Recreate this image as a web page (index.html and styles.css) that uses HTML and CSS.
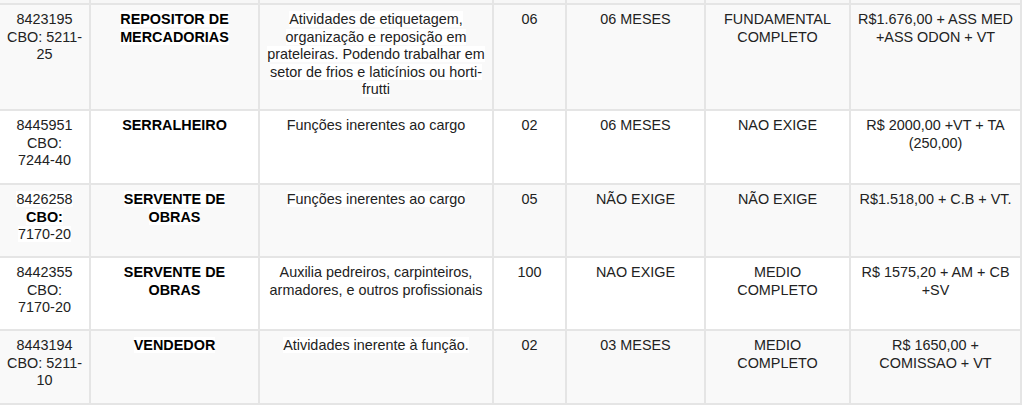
FILE: index.html
```html
<!DOCTYPE html>
<html lang="pt-BR">
<head>
<meta charset="utf-8">
<title>Vagas</title>
<link rel="stylesheet" href="styles.css">
</head>
<body>
<table class="vagas">
  <colgroup>
    <col class="c-cod"><col class="c-cargo"><col class="c-desc"><col class="c-qtd"><col class="c-exp"><col class="c-esc"><col class="c-sal">
  </colgroup>
  <tbody>
    <tr class="cut"><td></td><td></td><td></td><td></td><td></td><td></td><td></td></tr>
    <tr class="alt r-tall">
      <td>8423195 CBO: 5211-<wbr>25</td>
      <td><strong class="hl">REPOSITOR DE MERCADORIAS</strong></td>
      <td><span class="hl">Atividades de etiquetagem, organização e reposição em prateleiras. Podendo trabalhar em setor de frios e laticínios ou horti-<wbr>frutti</span></td>
      <td>06</td>
      <td>06 MESES</td>
      <td>FUNDAMENTAL COMPLETO</td>
      <td>R$1.676,00 + ASS MED +ASS ODON + VT</td>
    </tr>
    <tr class="r-a">
      <td>8445951 CBO: 7244&#8209;40</td>
      <td><strong>SERRALHEIRO</strong></td>
      <td>Funções inerentes ao cargo</td>
      <td>02</td>
      <td>06 MESES</td>
      <td>NAO EXIGE</td>
      <td>R$ 2000,00 +VT + TA (250,00)</td>
    </tr>
    <tr class="alt r-b">
      <td><span class="hl">8426258 <strong>CBO:</strong> 7170&#8209;20</span></td>
      <td><strong class="hl">SERVENTE DE OBRAS</strong></td>
      <td><span class="hl">Funções inerentes ao cargo</span></td>
      <td>05</td>
      <td>NÃO EXIGE</td>
      <td>NÃO EXIGE</td>
      <td>R$1.518,00 + C.B + VT.</td>
    </tr>
    <tr class="r-b">
      <td>8442355 CBO: 7170&#8209;20</td>
      <td><strong>SERVENTE DE OBRAS</strong></td>
      <td>Auxilia pedreiros, carpinteiros, armadores, e outros profissionais</td>
      <td>100</td>
      <td>NAO EXIGE</td>
      <td>MEDIO COMPLETO</td>
      <td>R$ 1575,20 + AM + CB +SV</td>
    </tr>
    <tr class="alt r-a">
      <td>8443194 CBO: 5211-<wbr>10</td>
      <td><strong class="hl">VENDEDOR</strong></td>
      <td><span class="hl">Atividades inerente à função.</span></td>
      <td>02</td>
      <td>03 MESES</td>
      <td>MEDIO COMPLETO</td>
      <td>R$ 1650,00 + COMISSAO + VT</td>
    </tr>
  </tbody>
</table>
</body>
</html>
```

FILE: styles.css
```css
html, body {
  margin: 0;
  padding: 0;
  background: #ffffff;
}

body {
  font-family: "Liberation Sans", Arial, sans-serif;
  font-size: 14.4px;
  line-height: 17.5px;
  color: #222222;
}

.vagas {
  width: 1022px;
  table-layout: fixed;
  border-collapse: separate;
  border-spacing: 0;
}

.c-cod { width: 91px; }
.c-cargo { width: 169px; }
.c-desc { width: 234px; }
.c-qtd { width: 73px; }
.c-exp { width: 139px; }
.c-esc { width: 145px; }
.c-sal { width: 171px; }

.vagas td {
  box-sizing: border-box;
  border-right: 2px solid #e5e5e5;
  border-bottom: 2px solid #e5e5e5;
  padding: 6px 7px 0;
  text-align: center;
  vertical-align: top;
  background: #ffffff;
}

.vagas tr.alt td {
  background: #f9f9f9;
}

.vagas tr.cut td {
  height: 5px;
  padding: 0;
  font-size: 0;
  line-height: 0;
  background: #f7f7f7;
}

.vagas tr.r-tall td { height: 106px; }
.vagas tr.r-a td { height: 74px; }
.vagas tr.r-b td { height: 73px; }

.vagas strong {
  color: #000000;
  font-weight: bold;
}

.hl {
  background: #ffffff;
}
```
